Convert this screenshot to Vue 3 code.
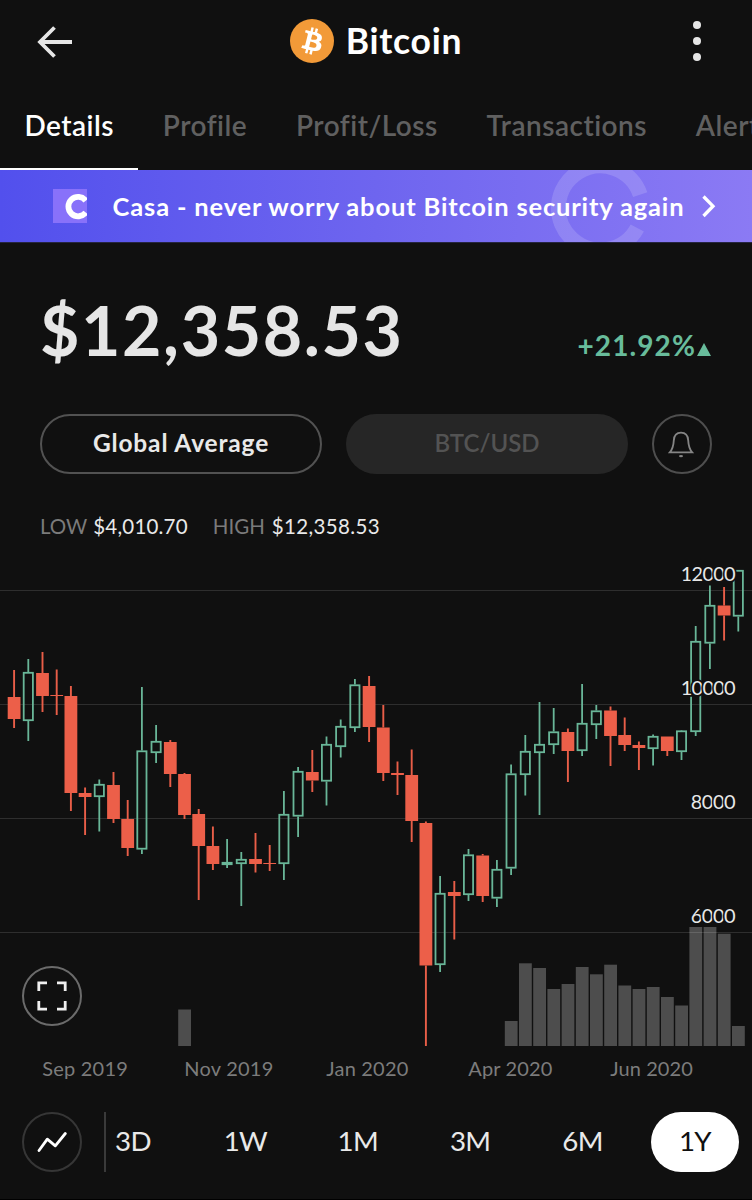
<script setup>
const tabs = ['Details', 'Profile', 'Profit/Loss', 'Transactions', 'Alerts']
const ranges = ['3D', '1W', '1M', '3M', '6M', '1Y']

const STEP = 14.2
const FIRST = 14.1
const FLOOR = 1046

// direction, wick top, body top, body bottom, wick bottom
const series = [
  ['d', 670, 697, 719, 728],
  ['u', 659, 672, 721, 741],
  ['d', 652, 673, 696, 712],
  ['d', 669.5, 695, 696, 715],
  ['d', 686, 696, 793, 811],
  ['d', 787.5, 793, 797, 835],
  ['u', 779.5, 784, 797, 831.5],
  ['d', 772, 785, 819, 823],
  ['d', 800, 819, 848, 856],
  ['u', 687, 750.5, 849.5, 854],
  ['u', 725, 741, 753, 763],
  ['d', 740, 742, 774, 787],
  ['d', 773, 774, 815, 819],
  ['d', 809, 814, 846, 900],
  ['d', 826.5, 846, 864, 870],
  ['u', 839, 862, 865, 868],
  ['u', 852, 859, 864, 906],
  ['d', 833, 859, 864, 872.5],
  ['d', 845, 863, 864, 871],
  ['u', 791, 814, 864, 880],
  ['u', 767, 771, 816.5, 837],
  ['d', 750, 772, 780.5, 792],
  ['u', 736.5, 744, 781.5, 805.5],
  ['u', 719.5, 726, 747, 757.5],
  ['u', 679, 684.5, 728, 732],
  ['d', 676, 686, 727, 742],
  ['d', 705, 727.5, 773, 781],
  ['d', 761.5, 773, 775, 795],
  ['d', 749.5, 775, 821, 842],
  ['d', 821.5, 823, 965.5, 1046],
  ['u', 876, 893, 965, 972],
  ['d', 881, 892, 896, 939.5],
  ['u', 849, 854.5, 895, 901],
  ['d', 854, 855.5, 896, 902],
  ['u', 860, 869, 898.5, 907],
  ['u', 764.5, 773.5, 868.5, 875],
  ['u', 735, 751, 775, 795.5],
  ['u', 702, 744, 753, 815],
  ['u', 708, 731.5, 745, 754],
  ['d', 728.5, 732, 751, 782],
  ['u', 684, 723, 751, 756],
  ['u', 705, 710.5, 725, 739],
  ['d', 706.5, 710.5, 736, 766],
  ['d', 717.5, 735, 745, 751],
  ['d', 741.5, 745, 748, 770],
  ['u', 734.5, 736, 749, 765.5],
  ['d', 736.5, 736.5, 751, 756],
  ['u', 730, 730.5, 752, 760],
  ['u', 626, 641, 732, 736],
  ['u', 585.5, 605, 643.5, 669],
  ['d', 587, 605.5, 615.5, 640.5],
  ['u', 570, 570, 616.5, 631.5],
]
const candles = series.map(([dir, high, top, bottom, low], i) => ({
  up: dir === 'u', high, top, bottom, low, x: FIRST + STEP * i,
}))

const volumes = [
  [12, 1009.5], [35, 1021], [36, 963.3], [37, 968], [38, 989], [39, 984],
  [40, 967], [41, 974.3], [42, 964.7], [43, 985.5], [44, 989], [45, 987],
  [46, 997], [47, 1005.5], [48, 927], [49, 927], [50, 933.7], [51, 1026],
].map(([i, y]) => ({ x: FIRST + STEP * i - 6.3, y, h: FLOOR - y }))

const levels = [
  { y: 590.5, label: '12000', w: 55 },
  { y: 704.5, label: '10000', w: 55 },
  { y: 818.5, label: '8000', w: 45 },
  { y: 932.5, label: '6000', w: 45 },
]
const months = [
  { x: 42.3, label: 'Sep 2019', w: 85.5 },
  { x: 184.3, label: 'Nov 2019', w: 89 },
  { x: 326.3, label: 'Jan 2020', w: 82 },
  { x: 468.3, label: 'Apr 2020', w: 84 },
  { x: 610.3, label: 'Jun 2020', w: 82.5 },
]
</script>

<template>
  <main class="screen">
    <header class="header">
      <svg class="back" width="36" height="34" viewBox="0 0 36 34">
        <path d="M17.5 2.5 3 17l14.5 14.5M3 17h32" />
      </svg>
      <div class="coin">
        <svg width="44" height="44" viewBox="0 0 32 32">
          <circle cx="16" cy="16" r="16" fill="#f29a38" />
          <path fill="#fff" d="M23.189 14.02c.314-2.096-1.283-3.223-3.465-3.975l.708-2.84-1.728-.43-.69 2.765c-.454-.114-.92-.22-1.385-.326l.695-2.783L15.596 6l-.708 2.839c-.376-.086-.746-.17-1.104-.26l.002-.009-2.384-.595-.46 1.846s1.283.294 1.256.312c.7.175.826.638.805 1.006l-.806 3.235c.048.012.11.03.18.057l-.183-.045-1.13 4.532c-.086.212-.303.531-.793.41.018.025-1.256-.313-1.256-.313l-.858 1.978 2.25.561c.418.105.828.215 1.231.318l-.715 2.872 1.727.43.708-2.84c.472.127.93.245 1.378.357l-.706 2.828 1.728.43.715-2.866c2.948.558 5.164.333 6.097-2.333.752-2.146-.037-3.385-1.588-4.192 1.13-.26 1.98-1.003 2.207-2.538zm-3.95 5.538c-.533 2.147-4.148.986-5.32.695l.95-3.805c1.172.293 4.929.872 4.37 3.11zm.535-5.569c-.487 1.953-3.495.96-4.47.717l.86-3.45c.975.243 4.118.696 3.61 2.733z" />
        </svg>
        <h1>Bitcoin</h1>
      </div>
      <div class="dots"><i></i><i></i><i></i></div>
    </header>

    <nav class="tabs">
      <a v-for="(tab, i) in tabs" :key="tab" :class="{ active: i === 0 }">{{ tab }}</a>
    </nav>

    <section class="banner">
      <svg class="watermark" width="100" height="72" viewBox="0 0 100 72">
        <path d="M90.2 24.600A42 42 0 1 0 87.3 58" />
      </svg>
      <svg class="casa" width="34" height="34" viewBox="0 0 34 34">
        <rect width="34" height="34" fill="#8871fa" />
        <path d="M32.800 11.700A9.7 9.7 0 1 0 32.800 23.500" />
      </svg>
      <span>Casa - never worry about Bitcoin security again</span>
      <svg class="chevron" width="16" height="24" viewBox="0 0 16 24">
        <path d="M2.5 2.5 12 12.2 2.5 22" />
      </svg>
    </section>

    <section class="quote">
      <div class="price">$12,358.53</div>
      <div class="change">+21.92%<svg width="14" height="13" viewBox="0 0 14 13"><path d="M7 0 14 13H0Z" /></svg></div>
    </section>

    <section class="market">
      <button class="pill outlined">Global Average</button>
      <button class="pill muted">BTC/USD</button>
      <button class="round">
        <svg width="26" height="28" viewBox="0 0 26 28">
          <path d="M1.8 22.4c2.9-3.3 3.7-6.4 4-12C6.1 5.5 8.6 2.7 13 2.7s6.9 2.8 7.2 7.7c.3 5.6 1.1 8.7 4 12Z" />
          <ellipse cx="13" cy="26.1" rx="2" ry="1.2" />
        </svg>
      </button>
    </section>

    <section class="extremes">
      <span class="key">LOW</span><span class="low">$4,010.70</span>
      <span class="key high-key">HIGH</span><span class="high">$12,358.53</span>
    </section>

    <section class="chart">
      <svg width="752" height="532" viewBox="0 556 752 532">
        <rect v-for="v in volumes" :key="v.x" class="volume" :x="v.x" :y="v.y" width="12.8" :height="v.h" />
        <path v-for="l in levels" :key="l.y" class="grid" :d="`M0 ${l.y}H752`" />
        <g v-for="c in candles" :key="c.x" :class="c.up ? 'up' : 'down'">
          <path :d="`M${c.x} ${c.high}V${c.top}M${c.x} ${c.bottom}V${c.low}`" />
          <rect v-if="c.up" :x="c.x - 4.6" :y="c.top + 0.8" width="9.2" :height="Math.max(c.bottom - c.top - 1.6, 0.5)" />
          <rect v-else :x="c.x - 6.4" :y="c.top" width="12.8" :height="c.bottom - c.top" />
        </g>
        <text
          v-for="l in levels" :key="l.label" class="level"
          :x="735.7 - l.w" :y="l.y - 9.7" :textLength="l.w"
        >{{ l.label }}</text>
        <text
          v-for="m in months" :key="m.label" class="month"
          :x="m.x" y="1076" :textLength="m.w"
        >{{ m.label }}</text>
      </svg>
      <button class="expand">
        <svg width="30" height="30" viewBox="0 0 30 30">
          <path d="M1.8 10V1.8H10M20 1.800H28.200V10M28.200 20V28.200H20M10 28.200H1.800V20" />
        </svg>
      </button>
    </section>

    <footer class="ranges">
      <button class="style">
        <svg width="30" height="20" viewBox="0 0 30 20">
          <path d="M2 18.5 10.3 7.2 18.3 13.8 28.3 1.5" />
        </svg>
      </button>
      <i class="divider"></i>
      <div class="list">
        <button v-for="r in ranges" :key="r" :class="{ on: r === '1Y' }">{{ r }}</button>
      </div>
    </footer>
  </main>
</template>

<style>
body { margin: 0; background: #101010; }
</style>

<style scoped>
.screen {
  box-sizing: border-box;
  width: 752px;
  height: 1200px;
  overflow: hidden;
  background: #101010;
  border-bottom: 1px solid #000;
  color: #e9e9e9;
  font-family: Lato, "Liberation Sans", sans-serif;
  white-space: nowrap;
}
button {
  box-sizing: border-box;
  margin: 0;
  padding: 0;
  border: 0;
  background: none;
  color: inherit;
  font: inherit;
}
svg { display: block; flex: none; }

.header {
  box-sizing: border-box;
  height: 82px;
  display: grid;
  grid-template-columns: 1fr auto 1fr;
  align-items: center;
  padding: 0 51px 0 37px;
}
.back { margin-top: 2px; }
.back path { fill: none; stroke: #e6e6e6; stroke-width: 3.8; }
.coin { display: flex; align-items: center; gap: 12px; margin-left: 14px; }
h1 {
  margin: -1px 0 0;
  color: #fff;
  font-size: 35.5px;
  font-weight: 700;
  line-height: 44px;
  letter-spacing: 0.7px;
}
.dots { justify-self: end; display: flex; flex-direction: column; gap: 8px; }
.dots i { width: 8px; height: 8px; border-radius: 50%; background: #e6e6e6; }

.tabs { display: flex; height: 88px; overflow: hidden; }
.tabs a {
  box-sizing: border-box;
  flex: none;
  height: 88px;
  padding: 0 24.4px;
  color: #606060;
  font-size: 28px;
  font-weight: 600;
  line-height: 86px;
  letter-spacing: 0.5px;
}
.tabs .active { color: #fff; border-bottom: 2px solid #fff; }

.banner {
  position: relative;
  display: flex;
  align-items: center;
  height: 72px;
  padding-left: 53px;
  overflow: hidden;
  background: linear-gradient(90deg, #5250ed, #6e65ef 50%, #8b7af4);
  box-shadow: 0 1px #262540;
  color: #fff;
}
.banner span {
  position: relative;
  margin: 0 0 0 25.6px;
  font-size: 25.5px;
  font-weight: 700;
  line-height: 36px;
  letter-spacing: 0.84px;
}
.watermark { position: absolute; left: 549.5px; top: 0; }
.watermark path { fill: none; stroke: rgba(255, 255, 255, 0.15); stroke-width: 15; }
.casa path { fill: none; stroke: #fff; stroke-width: 5.8; }
.chevron { position: relative; margin-left: auto; margin-right: 35px; }
.chevron path { fill: none; stroke: #fff; stroke-width: 3.3; }

.quote {
  display: flex;
  justify-content: space-between;
  align-items: baseline;
  height: 172px;
  box-sizing: border-box;
  padding: 47px 41px 0 40px;
}
.price {
  font-size: 68px;
  font-weight: 700;
  line-height: 81px;
  letter-spacing: 1.6px;
  color: #e6e6e6;
}
.change {
  display: flex;
  align-items: baseline;
  gap: 1px;
  color: #68bc9b;
  font-size: 28px;
  font-weight: 700;
  letter-spacing: 1.1px;
}
.change path { fill: #68bc9b; }

.market { display: flex; gap: 24px; padding: 0 40px; height: 60px; }
.pill {
  width: 282px;
  height: 60px;
  border-radius: 30px;
  padding-bottom: 4px;
  font-size: 24.5px;
  font-weight: 700;
  letter-spacing: 0.85px;
}
.outlined { border: 2px solid #525252; }
.muted { background: #262626; color: #535353; font-size: 24px; font-weight: 600; letter-spacing: 0; }
.round {
  display: grid;
  place-items: center;
  width: 60px;
  height: 60px;
  border: 2px solid #4e4e4e;
  border-radius: 50%;
}
.round svg { margin-left: -2px; margin-top: -1px; }
.round path { fill: none; stroke: #858585; stroke-width: 1.8; }
.round ellipse { fill: #858585; }

.extremes {
  display: flex;
  height: 82px;
  padding-left: 40px;
  font-size: 20.5px;
  line-height: 105px;
}
.key { color: #7b7b7b; }
.low { margin-left: 6px; letter-spacing: 0.2px; }
.high-key { margin-left: 25px; }
.high { margin-left: 7px; letter-spacing: 0.35px; }

.chart { position: relative; height: 532px; }
.volume { fill: #4d4d4d; }
.grid { fill: none; stroke: rgba(255, 255, 255, 0.13); stroke-width: 1; }
.up path, .up rect { fill: none; stroke: #69b698; stroke-width: 1.8; }
.down path { stroke: #e95e48; stroke-width: 1.9; }
.down rect { fill: #ec5f49; }
.level {
  fill: #e8e8e8;
  stroke: #101010;
  stroke-width: 3.5;
  paint-order: stroke;
  font-size: 20px;
}
.month { fill: #7c7c7c; font-size: 20px; }
.expand, .style {
  display: grid;
  place-items: center;
  width: 60px;
  height: 60px;
  border: 2px solid #6b6b6b;
  border-radius: 50%;
}
.expand { position: absolute; left: 22px; top: 409.5px; }
.expand path { fill: none; stroke: #f0f0f0; stroke-width: 2.8; }

.ranges { display: flex; padding: 24px 0 0 22px; }
.style { border-color: #363636; }
.style path { fill: none; stroke: #fff; stroke-width: 2.8; stroke-linecap: round; stroke-linejoin: round; }
.divider { width: 2px; height: 60px; margin-left: 22px; background: #3a3a3a; }
.list { display: flex; gap: 24.4px; margin-left: -17px; }
.list button {
  flex: none;
  width: 88px;
  height: 60px;
  border-radius: 30px;
  padding-bottom: 3px;
  font-size: 27.7px;
  letter-spacing: -0.6px;
}
.list .on { background: #fff; color: #101010; }
</style>
